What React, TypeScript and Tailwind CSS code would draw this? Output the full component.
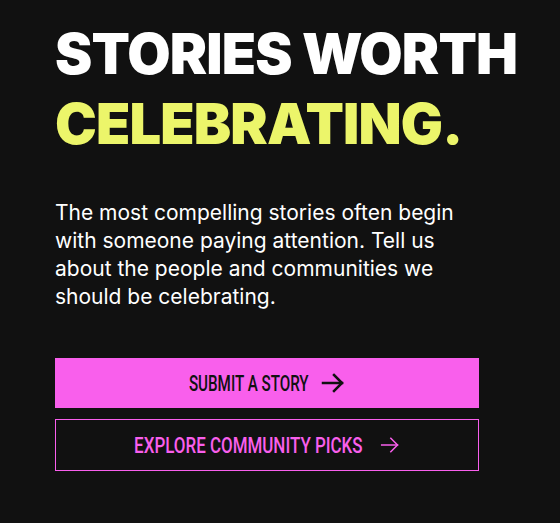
import React from "react";

function Arrow({ className, stroke }: { className?: string; stroke: number }) {
  return (
    <svg className={className} viewBox="0 0 24 24" fill="none" stroke="currentColor" strokeWidth={stroke} strokeLinecap="square" strokeLinejoin="miter">
      <path d="M2 12h19" />
      <path d="M13 4l8 8-8 8" />
    </svg>
  );
}

export default function App() {
  return (
    <div className="min-h-[523px] w-[560px] bg-[#111111] pl-[55px] pt-[19px]">
      <h1
        className="whitespace-nowrap text-[56px] leading-[70px] font-black tracking-[-0.015em] uppercase"
        style={{ fontFamily: "Inter, sans-serif" }}
      >
        <span className="block text-white">Stories Worth</span>
        <span className="block text-[#ecf56a]">Celebrating.</span>
      </h1>
      <p
        className="mt-[40px] w-[430px] text-[21px] leading-[28px] text-white"
        style={{ fontFamily: "Inter, sans-serif" }}
      >
        The most compelling stories often begin with someone paying attention. Tell us about the people and communities we should be celebrating.
      </p>
      <div className="mt-[47px] flex w-[424px] flex-col gap-[11px]">
        <button className="flex h-[50px] items-center justify-center gap-[12px] bg-[#f95fec] text-[#111111]">
          <span
            className="inline-block text-[22px] font-medium uppercase scale-x-[0.69] -mx-[27px]"
            style={{ fontFamily: "Roboto, sans-serif" }}
          >
            Submit a Story
          </span>
          <Arrow className="h-[24px] w-[24px]" stroke={2.5} />
        </button>
        <button className="flex h-[52px] items-center justify-center gap-[17px] border-[1.5px] border-[#f95fec] text-[#f95fec]">
          <span
            className="inline-block text-[22px] font-medium uppercase scale-x-[0.77] -mx-[34px]"
            style={{ fontFamily: "Roboto, sans-serif" }}
          >
            Explore Community Picks
          </span>
          <Arrow className="h-[20px] w-[20px]" stroke={1.8} />
        </button>
      </div>
    </div>
  );
}
